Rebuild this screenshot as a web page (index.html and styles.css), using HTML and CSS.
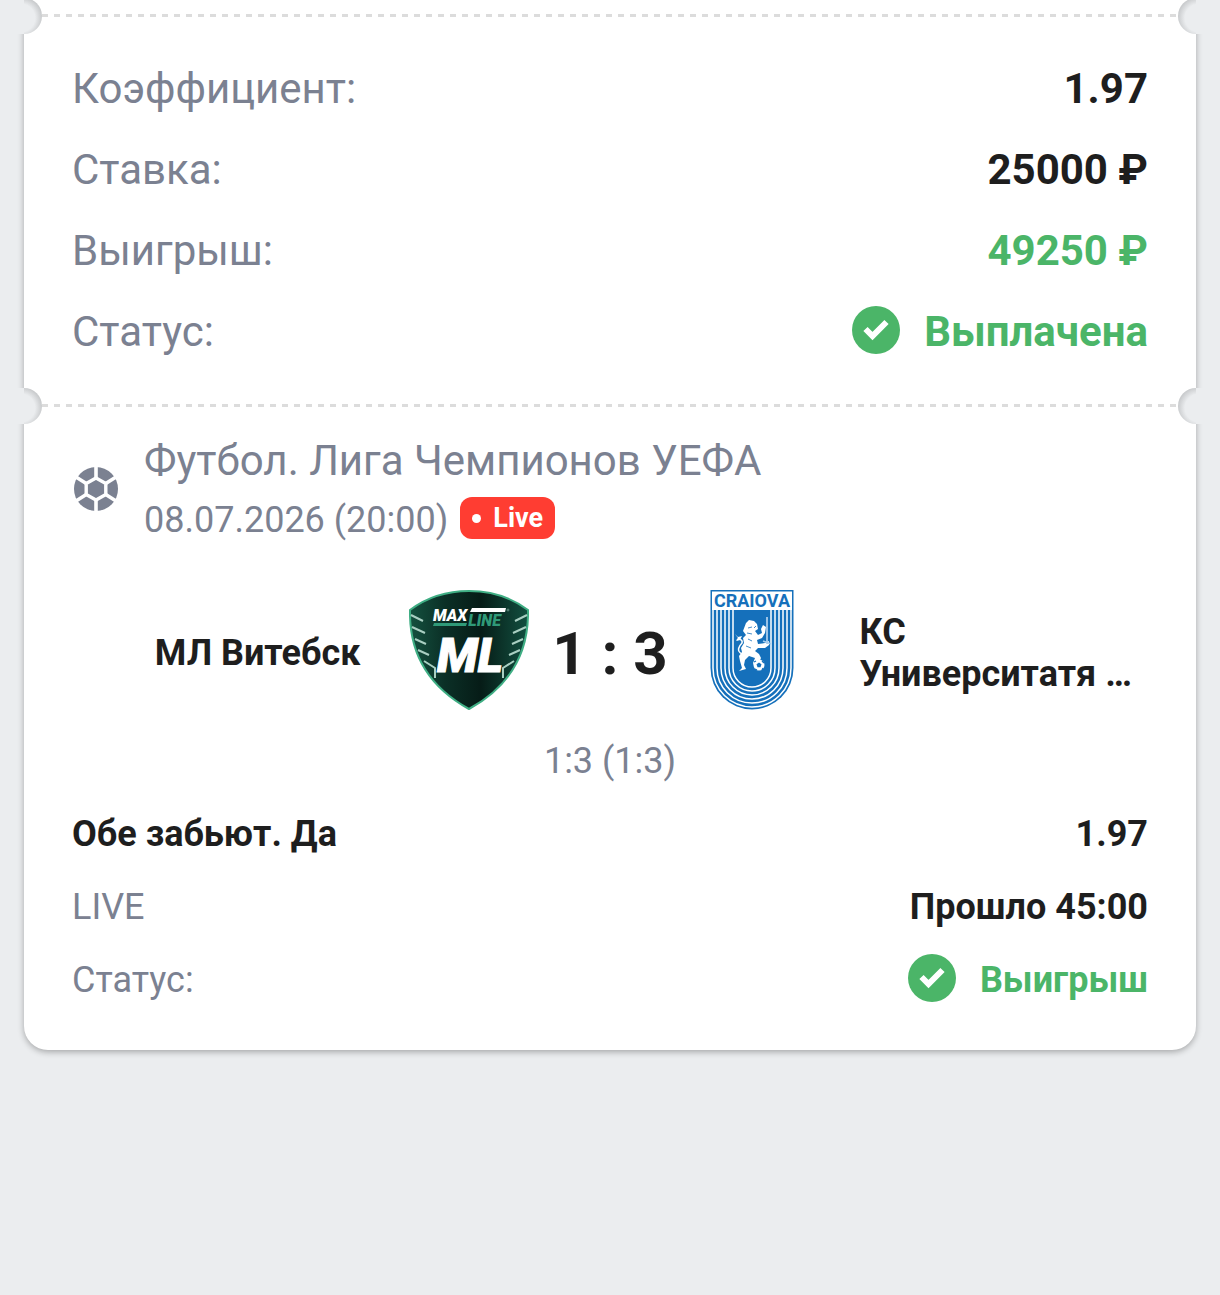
FILE: index.html
```
<!DOCTYPE html>
<html lang="ru">
<head>
	<meta charset="UTF-8">
	<meta name="viewport" content="width=device-width, initial-scale=1">
	<title>Ставка</title>
	<link rel="stylesheet" href="styles.css">
</head>
<body>
	<main class="coupon">
		<div class="tear"></div>

		<!-- итоги купона -->
		<section class="summary">
			<div class="row">
				<span class="label">Коэффициент:</span>
				<span class="value">1.97</span>
			</div>
			<div class="row">
				<span class="label">Ставка:</span>
				<span class="value">25000 ₽</span>
			</div>
			<div class="row">
				<span class="label">Выигрыш:</span>
				<span class="value green">49250 ₽</span>
			</div>
			<div class="row">
				<span class="label">Статус:</span>
				<span class="value green status">
					<svg class="check" viewBox="0 0 48 48" aria-hidden="true">
						<circle cx="24" cy="24" r="24" fill="#4bb568"/>
						<path d="M13.500 23L20.500 30L34.500 16" fill="none" stroke="#fff" stroke-width="6"/>
					</svg>
					Выплачена
				</span>
			</div>
		</section>

		<div class="tear"></div>

		<!-- событие -->
		<section class="event">
			<header class="head">
				<svg class="ball" viewBox="0 0 48 48" aria-hidden="true">
					<circle cx="24" cy="24" r="22" fill="#7b8191"/>
					<path d="M24 13L33.800 18.500V29.500L24 35L14.200 29.500V18.500Z" fill="none" stroke="#fff" stroke-width="3.400"/>
					<path d="M24 0V14M24 34V48M33 19L44 12M33 29L44 36M15 19L4 12M15 29L4 36" stroke="#fff" stroke-width="3.600"/>
				</svg>
				<div class="info">
					<h1 class="title">Футбол. Лига Чемпионов УЕФА</h1>
					<div class="date">
						<time datetime="2026-07-08T20:00">08.07.2026 (20:00)</time>
						<span class="live">Live</span>
					</div>
				</div>
			</header>

			<div class="match">
				<div class="team home">МЛ Витебск</div>
				<svg class="logo" viewBox="0 0 120 120" role="img" aria-label="МЛ Витебск">
					<defs>
						<linearGradient id="shield" x1="0" x2="1" y1="0" y2="0">
							<stop offset="0" stop-color="#14513f"/>
							<stop offset="0.300" stop-color="#0b2f26"/>
							<stop offset="0.600" stop-color="#061c17"/>
							<stop offset="1" stop-color="#125040"/>
						</linearGradient>
					</defs>
					<path d="M60 1C38 1 17 8 1 20C0 66 22 98 60 119C98 98 120 66 119 20C103 8 82 1 60 1Z" fill="url(#shield)" stroke="#3fae84" stroke-width="2"/>
					<path d="M2 25L14 31M3 37L16 43M6 49L17 54M9 60L20 65M15 71L26 78V88" fill="none" stroke="#a9cfc2" stroke-width="2"/>
					<path d="M118 25L106 31M117 37L104 43M114 49L103 54M111 60L100 65M105 71L94 78V88" fill="none" stroke="#a9cfc2" stroke-width="2"/>
					<path d="M63 18H97L96 22H61Z" fill="#fff"/>
					<path d="M25 33H58L57 36H24Z" fill="#2f9a78"/>
					<text x="24" y="31" class="crest-small" fill="#fff">MAX<tspan dx="1" dy="5" fill="#2f9a78">LINE</tspan></text>
					<circle cx="99" cy="20" r="1" fill="none" stroke="#a9cfc2" stroke-width="0.500"/>
					<text x="28" y="82" class="crest-big" fill="#fff" stroke="#fff">ML</text>
				</svg>
				<div class="score">1 : 3</div>
				<svg class="logo" viewBox="0 0 120 120" role="img" aria-label="КС Университатя Крайова">
					<path d="M18.500 0H101.500V78A41.500 41.500 0 0 1 18.500 78Z" fill="#1570bb"/>
					<path d="M20 1.500H100V20H20Z" fill="#fff"/>
					<g fill="none" stroke="#fff" stroke-width="1.500">
						<path d="M21 20V78A39 39 0 0 0 99 78V20"/>
						<path d="M25 20V78A35 35 0 0 0 95 78V20"/>
						<path d="M29 20V78A31 31 0 0 0 91 78V20"/>
						<path d="M33 20V78A27 27 0 0 0 87 78V20"/>
						<path d="M37 20V78A23 23 0 0 0 83 78V20"/>
						<path d="M41 20V78A19 19 0 0 0 79 78V20"/>
					</g>
					<text x="60" y="17" text-anchor="middle" class="crest-name" fill="#1570bb">CRAIOVA</text>
					<!-- лев с мечом -->
					<path d="M54 33L57 30L62 31L65 34L66 39L63 41L66 45L70 43L69 39L71 35L74 37L73 43L70 48L65 50L66 54L73 53L77 51V55L73 58L66 58L63 61L67 64L69 68L66 75L68 79L63 78L61 73L63 68L57 66L53 70L52 75L54 79L47 81L50 78L48 71L47 66L50 62L49 58L52 53L51 48L54 45L51 41Z" fill="#fff"/>
					<path d="M50 64C44 61 47 56 50 53C51 50 47 48 45 50" fill="none" stroke="#fff" stroke-width="1.500"/>
					<path d="M43 44L46 47L50 46L48 50L44 51L46 48Z" fill="#fff"/>
					<path d="M75 27V54M71 51L79 54" stroke="#a9cdec" stroke-width="1.800"/>
					<path d="M56 38L60 37M55 43L60 44M56 49L60 51M54 56L59 58M64 36L62 38" stroke="#1570bb" stroke-width="0.800"/>
					<circle cx="67" cy="75" r="5.500" fill="#fff"/>
					<path d="M67 72.500L69.500 74.300L68.500 77.300H65.500L64.500 74.300Z" fill="#1570bb"/>
					<path d="M62 72L64 71M70 71L72 73M63 79L65 80M70 80L71 78" stroke="#1570bb" stroke-width="1.200"/>
				</svg>
				<div class="team">КС Университатя …</div>
			</div>
			<div class="periods">1:3 (1:3)</div>

			<!-- исход -->
			<div class="row">
				<span class="value">Обе забьют. Да</span>
				<span class="value">1.97</span>
			</div>
			<div class="row">
				<span class="label">LIVE</span>
				<span class="value">Прошло 45:00</span>
			</div>
			<div class="row">
				<span class="label">Статус:</span>
				<span class="value green status">
					<svg class="check" viewBox="0 0 48 48" aria-hidden="true">
						<circle cx="24" cy="24" r="24" fill="#4bb568"/>
						<path d="M13.500 23L20.500 30L34.500 16" fill="none" stroke="#fff" stroke-width="6"/>
					</svg>
					Выигрыш
				</span>
			</div>
		</section>
	</main>
</body>
</html>
```

FILE: styles.css
```
body {
	min-height: 100vh;
	margin: 0;
	background-color: #ebedef;
	color: #1e1e1e;
	font-family: Roboto, "Liberation Sans", sans-serif;
	font-size: 36px;
}

.coupon {
	margin: 0 24px;
	background-color: #FFF;
	border-radius: 0 0 24px 24px;
	box-shadow: 0 2px 6px rgba(0, 0, 0, 0.3);
}

/* линия отрыва */
.tear {
	position: relative;
	height: 32px;
	background: repeating-linear-gradient(90deg, #dcdcdc 0, #dcdcdc 6px, transparent 6px, transparent 12px) 18px 14px / calc(100% - 36px) 3px no-repeat;
}

/* вырезы по краям */
.tear::before,
.tear::after {
	content: "";
	position: absolute;
	top: -2px;
	width: 26px;
	height: 36px;
}

.tear::before {
	left: -8px;
	border-radius: 0 18px 18px 0;
	background: radial-gradient(circle at -3px 20px, #ebedef 14px, #c4c6c8 22px) 8px 0 no-repeat #ebedef;
}

.tear::after {
	right: -8px;
	border-radius: 18px 0 0 18px;
	background: radial-gradient(circle at 29px 20px, #ebedef 14px, #c4c6c8 22px) -8px 0 no-repeat #ebedef;
}

.summary {
	padding: 16px 48px 18px;
	font-size: 42px;
}

.row {
	display: flex;
	justify-content: space-between;
	align-items: center;
	height: 73px;
}

.summary .row {
	height: 81px;
}

.label {
	color: #7b8191;
}

.value {
	font-weight: bold;
}

.green {
	color: #4bb568;
}

.status {
	display: flex;
	align-items: center;
	gap: 24px;
}

.check {
	width: 48px;
	height: 48px;
	margin-bottom: 4px;
}

.event {
	padding: 8px 48px 34px;
}

.head {
	display: flex;
	align-items: center;
	gap: 24px;
	color: #7b8191;
}

.ball {
	flex: none;
	width: 48px;
	height: 48px;
}

.title {
	margin: 0;
	font-size: 42px;
	font-weight: normal;
	line-height: 62px;
}

.date {
	display: flex;
	align-items: center;
	gap: 12px;
	line-height: 56px;
}

.live {
	display: flex;
	align-items: center;
	gap: 12px;
	height: 42px;
	padding: 0 12px;
	margin-bottom: 4px;
	border-radius: 12px;
	background-color: #ff3d32;
	color: #FFF;
	font-size: 27px;
	font-weight: bold;
}

.live::before {
	content: "";
	width: 9px;
	height: 9px;
	border-radius: 50%;
	background-color: #FFF;
}

.match {
	display: grid;
	grid-template-columns: 1fr 120px 163px 120px 1fr;
	align-items: center;
	margin: 42px 0 24px;
}

.team {
	padding-left: 48px;
	font-weight: bold;
	line-height: 42px;
}

.home {
	padding: 0 48px 0 0;
	text-align: right;
}

.logo {
	width: 120px;
	height: 120px;
	margin-bottom: 6px;
}

.crest-small {
	font-size: 16px;
	font-style: italic;
	font-weight: 900;
}

.crest-big {
	font-size: 48px;
	font-style: italic;
	font-weight: 900;
}

.crest-name {
	font-size: 18px;
	font-weight: bold;
}

.score {
	font-size: 60px;
	font-weight: bold;
	text-align: center;
}

.periods {
	margin-bottom: 15px;
	color: #7b8191;
	line-height: 42px;
	text-align: center;
}
```
